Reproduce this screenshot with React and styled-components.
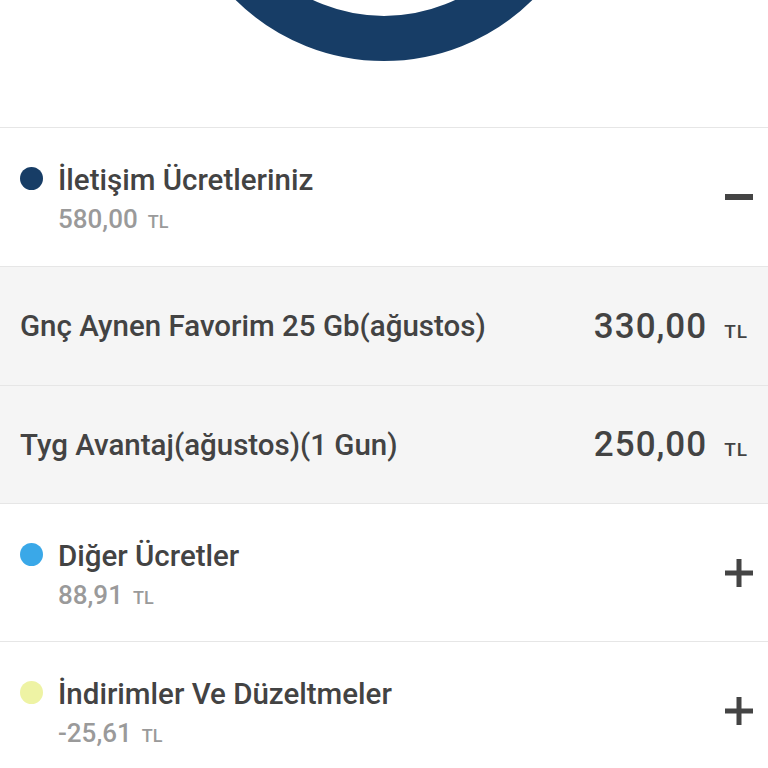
import React from "react";
import styled, { createGlobalStyle } from "styled-components";

const Global = createGlobalStyle`
  html, body { margin: 0; padding: 0; background: #fff; }
  body { font-family: Roboto, "Noto Sans", sans-serif; }
`;

const Page = styled.div`
  width: 768px;
  height: 768px;
  overflow: hidden;
  background: #fff;
  display: flex;
  flex-direction: column;
`;

const ChartArea = styled.div`
  height: 128px;
  box-sizing: border-box;
  display: flex;
  justify-content: center;
  align-items: flex-start;
  border-bottom: 1px solid #e6e6e6;
  flex-shrink: 0;
`;

const Group = styled.div`
  height: ${(p) => p.$h}px;
  display: flex;
  align-items: flex-start;
  padding: 34px 14px 0 20px;
  background: #fff;
  border-bottom: 1px solid #e6e6e6;
  flex-shrink: 0;
  box-sizing: border-box;
`;

const Dot = styled.span`
  width: 23px;
  height: 23px;
  border-radius: 50%;
  background: ${(p) => p.$color};
  flex-shrink: 0;
  margin-top: 5px;
  margin-right: 15px;
`;

const GroupText = styled.div`
  flex: 1;
  display: flex;
  flex-direction: column;
  gap: 6px;
`;

const GroupTitle = styled.div`
  font-size: 29.5px;
  font-weight: 500;
  color: #434343;
  line-height: 36px;
`;

const GroupAmount = styled.div`
  font-size: 26px;
  font-weight: 500;
  color: #9a9a9a;
  line-height: 30px;
`;

const Unit = styled.span`
  font-size: ${(p) => p.$size}px;
  font-weight: 500;
  margin-left: ${(p) => p.$gap}px;
`;

const Toggle = styled.div`
  width: 30px;
  height: 30px;
  display: flex;
  align-items: center;
  justify-content: center;
  margin-top: 20px;
`;

const Item = styled.div`
  height: ${(p) => p.$h}px;
  display: flex;
  align-items: center;
  justify-content: space-between;
  padding: 0 20px 0 20px;
  background: #f5f5f5;
  border-bottom: 1px solid #e6e6e6;
  box-sizing: border-box;
  flex-shrink: 0;
`;

const ItemName = styled.div`
  font-size: 29.5px;
  font-weight: 500;
  color: #434343;
`;

const ItemPrice = styled.div`
  font-size: 35px;
  font-weight: 500;
  color: #434343;
  letter-spacing: 1px;
  display: flex;
  align-items: baseline;
`;

const Minus = () => (
  <svg width="30" height="30" viewBox="0 0 30 30">
    <rect x="1" y="12" width="28" height="6" fill="#444" />
  </svg>
);

const Plus = () => (
  <svg width="30" height="30" viewBox="0 0 30 30">
    <rect x="1" y="12.5" width="28" height="5" fill="#444" />
    <rect x="12.5" y="1" width="5" height="28" fill="#444" />
  </svg>
);

const Donut = () => (
  <svg width="768" height="127" viewBox="0 0 768 127">
    <circle cx="384" cy="-150" r="188.5" fill="none" stroke="#173d66" strokeWidth="45" />
  </svg>
);

const GroupRow = ({ h, color, title, amount, open }) => (
  <Group $h={h}>
    <Dot $color={color} />
    <GroupText>
      <GroupTitle>{title}</GroupTitle>
      <GroupAmount>
        {amount}
        <Unit $size={18} $gap={10}>TL</Unit>
      </GroupAmount>
    </GroupText>
    <Toggle>{open ? <Minus /> : <Plus />}</Toggle>
  </Group>
);

const ItemRow = ({ h, name, price }) => (
  <Item $h={h}>
    <ItemName>{name}</ItemName>
    <ItemPrice>
      {price}
      <Unit $size={19} $gap={17}>TL</Unit>
    </ItemPrice>
  </Item>
);

export default function App() {
  return (
    <>
      <Global />
      <Page>
        <ChartArea>
          <Donut />
        </ChartArea>
        <GroupRow h={139} color="#173d66" title="İletişim Ücretleriniz" amount="580,00" open />
        <ItemRow h={119} name="Gnç Aynen Favorim 25 Gb(ağustos)" price="330,00" />
        <ItemRow h={118} name="Tyg Avantaj(ağustos)(1 Gun)" price="250,00" />
        <GroupRow h={138} color="#3aa8e8" title="Diğer Ücretler" amount="88,91" />
        <GroupRow h={138} color="#eef3a4" title="İndirimler Ve Düzeltmeler" amount="-25,61" />
      </Page>
    </>
  );
}
